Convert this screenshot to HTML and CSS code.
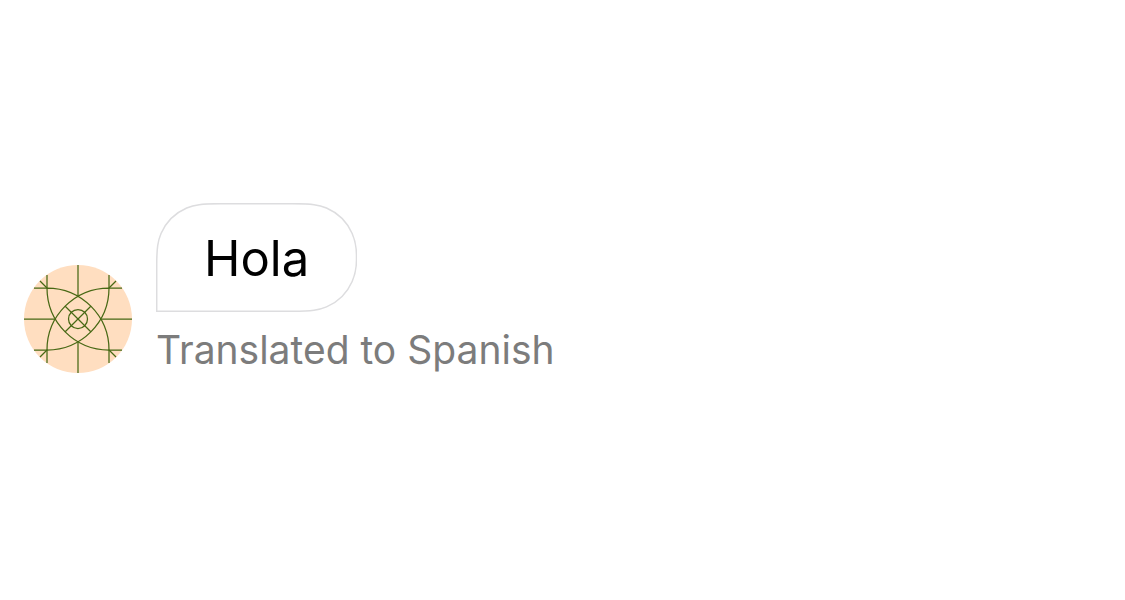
FILE: index.html
```html
<!DOCTYPE html>
<html lang="en">
<head>
<meta charset="utf-8">
<meta name="viewport" content="width=device-width, initial-scale=1">
<title>Chat</title>
<link rel="stylesheet" href="styles.css">
</head>
<body>
<main class="chat">
  <article class="message">
    <svg class="avatar" viewBox="0 0 108 108" aria-hidden="true">
      <circle cx="54" cy="54" r="54" fill="#ffdec0"/>
      <g fill="none" stroke="#476814" stroke-width="1.25">
        <path d="M54 0V31.3M54 76.7V108M0 54H31.3M76.7 54H108"/>
        <path d="M23 10V23H10M85 10V23H98M23 98V85H10M85 98V85H98"/>
        <path d="M16 16L23 23M92 16L85 23M16 92L23 85M92 92L85 85"/>
        <path d="M23 23A62 62 0 0 1 85 85A62 62 0 0 1 23 23M85 23A62 62 0 0 1 23 85A62 62 0 0 1 85 23"/>
        <path d="M41.2 41.2L66.8 66.8M66.8 41.2L41.2 66.8"/>
        <circle cx="54" cy="54" r="9.5"/>
      </g>
    </svg>
    <div class="content">
      <div class="bubble">
        <svg class="outline" viewBox="0 0 200 109" preserveAspectRatio="none" aria-hidden="true">
          <path d="M.7 108.2V64C.7 45 1.8 38 5 30.5C10 19 19 10 30.5 5C38 1.8 45 .7 64 .7H136C155 .7 162 1.8 169.5 5C181 10 190 19 195 30.5C197.8 37 199.3 45 199.3 52V57C199.3 64 197.8 72 195 78.5C190 90 181 99 169.5 103.9C162 107.1 155 108.2 136 108.2Z" fill="#fff" stroke="#dddddf" stroke-width="1.5"/>
        </svg>
        <p class="text">Hola</p>
      </div>
      <p class="caption">Translated to Spanish</p>
    </div>
  </article>
</main>
</body>
</html>
```
FILE: styles.css
```css
body {
  margin: 0;
  background: #fff;
  color: #000;
  font-family: Inter, "Liberation Sans", sans-serif;
}

.chat {
  padding: 203px 24px;
}

.message {
  display: flex;
  align-items: flex-end;
  gap: 24px;
}

.avatar {
  flex: none;
  width: 108px;
  height: 108px;
}

.content {
  display: flex;
  flex-direction: column;
  align-items: flex-start;
  gap: 14px;
}

.bubble {
  position: relative;
  padding: 25px 48px 23px;
}

.outline {
  position: absolute;
  inset: 0;
  width: 100%;
  height: 100%;
}

.text {
  position: relative;
  margin: 0;
  font-size: 49px;
  line-height: 61px;
}

.caption {
  margin: 0;
  color: #7c7c7c;
  font-size: 39px;
  line-height: 47px;
}
```
